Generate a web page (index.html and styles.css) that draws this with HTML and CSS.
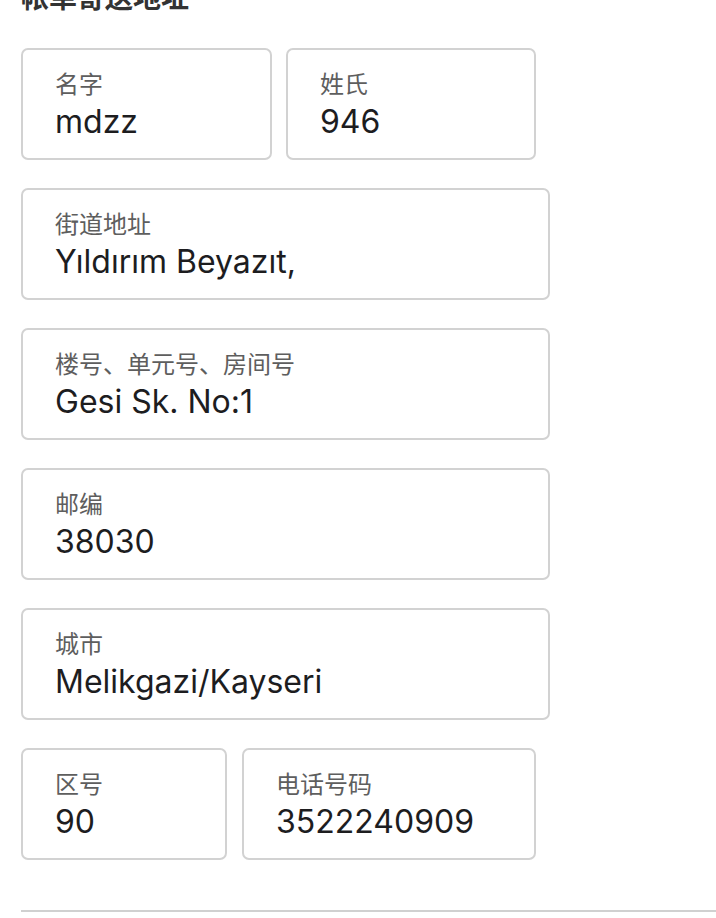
FILE: index.html
```html
<!DOCTYPE html>
<html lang="zh">
<head>
<meta charset="utf-8">
<link rel="stylesheet" href="styles.css">
</head>
<body>
<div class="page">
  <h2 class="heading">帐单寄送地址</h2>
  <div class="form">
    <div class="row">
      <div class="field w-first"><div class="label">名字</div><div class="value">mdzz</div></div>
      <div class="field w-last"><div class="label">姓氏</div><div class="value">946</div></div>
    </div>
    <div class="field w-full"><div class="label">街道地址</div><div class="value">Yıldırım Beyazıt,</div></div>
    <div class="field w-full"><div class="label">楼号、单元号、房间号</div><div class="value">Gesi Sk. No:1</div></div>
    <div class="field w-full"><div class="label">邮编</div><div class="value">38030</div></div>
    <div class="field w-full"><div class="label">城市</div><div class="value">Melikgazi/Kayseri</div></div>
    <div class="row row-phone">
      <div class="field w-area"><div class="label">区号</div><div class="value">90</div></div>
      <div class="field w-phone"><div class="label">电话号码</div><div class="value">3522240909</div></div>
    </div>
  </div>
  <div class="divider"></div>
</div>
</body>
</html>
```
FILE: styles.css
```css
html, body {
  margin: 0;
  padding: 0;
  background: #ffffff;
}
body {
  font-family: Inter, "Noto Sans CJK SC", sans-serif;
  color: #1d1d1f;
  overflow: hidden;
}
.page {
  padding-left: 21px;
}
.heading {
  margin: -18px 0 0 0;
  font-family: "Noto Sans CJK SC", sans-serif;
  font-size: 28px;
  line-height: 28px;
  font-weight: 700;
  color: #333333;
}
.form {
  margin-top: 38px;
  display: flex;
  flex-direction: column;
  gap: 28px;
}
.row {
  display: flex;
  gap: 14px;
}
.row-phone {
  gap: 15px;
}
.field {
  box-sizing: border-box;
  height: 112px;
  border: 2px solid #d2d2d2;
  border-radius: 7px;
  padding: 21px 0 0 32px;
}
.w-first { width: 251px; }
.w-last { width: 250px; }
.w-full { width: 529px; }
.w-area { width: 206px; }
.w-phone { width: 294px; }
.label {
  font-family: "Noto Sans CJK SC", sans-serif;
  font-size: 24px;
  line-height: 24px;
  color: #5e5e5e;
}
.value {
  margin-top: 11px;
  font-family: Inter, sans-serif;
  font-size: 32px;
  line-height: 32px;
  color: #1d1d1f;
  white-space: nowrap;
}
.divider {
  margin-top: 50px;
  height: 2px;
  background: #d0d0d0;
}
```
